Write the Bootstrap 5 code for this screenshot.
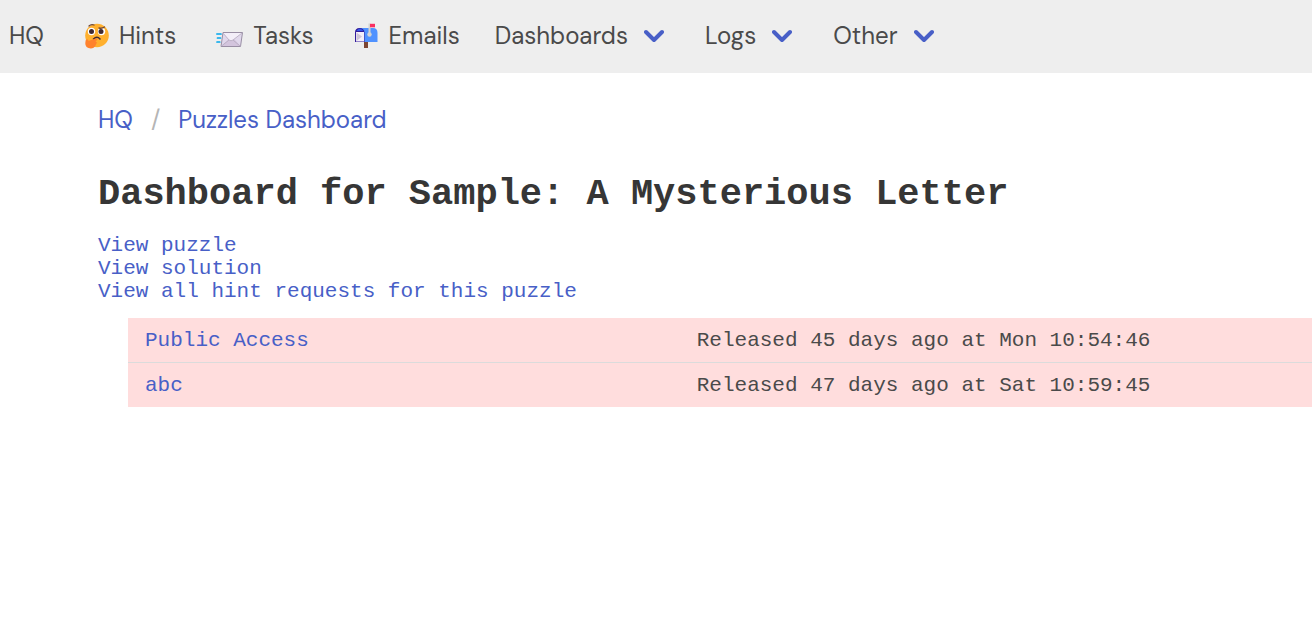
<!DOCTYPE html>
<html lang="en">
<head>
<meta charset="utf-8">
<meta name="viewport" content="width=device-width, initial-scale=1">
<title>Puzzles Dashboard</title>
<link href="https://cdn.jsdelivr.net/npm/bootstrap@5.3.0/dist/css/bootstrap.min.css" rel="stylesheet">
<style>
  body { color: #4a4a4a; font-family: "Courier New", "Liberation Mono", monospace; font-size: 21px; line-height: 23px; }
  a { color: #485fc7; text-decoration: none; }
  .hq-bar, .crumbs { font-family: "DM Sans", Inter, sans-serif; font-size: 24px; line-height: 36px; }
  .hq-bar { background: #eee; padding: 18px 9px 19px; }
  .hq-links { column-gap: 35px; }
  .hq-link { color: #4a4a4a; white-space: nowrap; }
  .hq-link svg { margin: 0 10px 0 5px; }
  .hq-menu { gap: 16px; }
  .hq-menu svg { margin: 0 6px 0 0; }
  .page-body { padding: 29px 0 0 98px; }
  .crumbs { --bs-breadcrumb-divider-color: #b5b5b5; --bs-breadcrumb-item-padding-x: 18px; --bs-breadcrumb-font-size: 24px; margin-bottom: 35px; }
  .page-title { color: #363636; font-size: 37px; line-height: 42px; margin-bottom: 19px; }
  .team-table { margin: 15px 0 0 30px; width: calc(100% - 30px); table-layout: fixed; background: #ffdddd; }
  .team-table td { padding: 11px 17px 10px; }
  .team-table tr + tr td { border-top: 1px solid #dbdbdb; }
  .team-name { width: 46.6%; }
</style>
</head>
<body>
<nav class="hq-bar" aria-label="Main">
  <div class="hq-links d-flex flex-wrap align-items-center">
    <a class="hq-link" href="#">HQ</a>
    <a class="hq-link d-flex align-items-center" href="#">
      <svg width="25" height="26" viewBox="0 0 25 26" aria-hidden="true">
        <circle cx="13" cy="12.500" r="11.800" fill="#ffb02e"/>
        <circle cx="7.500" cy="8.500" r="3.700" fill="#fff"/><circle cx="17.500" cy="8.500" r="3.700" fill="#fff"/>
        <circle cx="7.500" cy="8.500" r="2.500" fill="#402a32"/><circle cx="17" cy="8.500" r="2.500" fill="#402a32"/>
        <path d="M5 3Q7 1 10 2M15 5Q18 5.800 20.500 4" fill="none" stroke="#6d4534" stroke-width="1.300" stroke-linecap="round"/>
        <path d="M9.500 16Q13 12.500 16 16" fill="none" stroke="#402a32" stroke-width="1.600" stroke-linecap="round"/>
        <path d="M1.500 18.500C1.500 16 4 15.500 4.500 18L11.500 15.500C13.500 15 14 16.500 12.500 17.500L11.500 18.500L13 19.500L11.500 22.500C10.500 25 7.500 26 4.500 25C1.500 24 1 21 1.500 18.500Z" fill="#ff822d"/>
      </svg>Hints</a>
    <a class="hq-link d-flex align-items-center" href="#">
      <svg width="27" height="24" viewBox="0 0 27 24" aria-hidden="true">
        <path d="M7 8.500H26.500L24.500 22.500H5Z" fill="#e1d8ec" stroke="#998ea4" stroke-width="1"/>
        <path d="M5.500 22L13 15H18L24.500 22Z" fill="#d3c4dd"/>
        <path d="M7 9H26L17 16Q15 17.500 13 16Z" fill="#f3eef8"/>
        <path d="M7 9L13 16Q15 17.500 17 16L26 9M5.500 22L13 16M24 22L17 16" fill="none" stroke="#b4a8be" stroke-width=".8"/>
        <path d="M.8 10H5M1.500 14H4.500M1 18H3.800" stroke="#00a6ed" stroke-width="1.700" stroke-linecap="round"/>
      </svg>Tasks</a>
    <a class="hq-link d-flex align-items-center" href="#">
      <svg width="25" height="26" viewBox="0 0 25 26" aria-hidden="true">
        <path d="M10 18H14V25H10Z" fill="#7d4533"/>
        <path d="M6 5H19Q23.500 5 23.500 10V19H9Z" fill="#5092ff"/>
        <path d="M1 19V9.500Q1 5 5.500 5T10.500 9.500V19Z" fill="#321b9b"/>
        <path d="M2.500 8Q5.500 3.500 9.500 8Z" fill="#3457e8"/>
        <path d="M2 9H10V18.500H2Z" fill="#f4eef9"/>
        <path d="M2.500 9.500L8 13.500L2.500 18Z" fill="#cdc4d6"/>
        <path d="M15.500 11V.5" stroke="#d3d3d3" stroke-width="2"/>
        <circle cx="15.500" cy="11.500" r="2.200" fill="#d3d3d3"/>
        <path d="M16 .8H21V4.300H16Z" fill="#f92f60"/>
      </svg>Emails</a>
    <a class="hq-link hq-menu d-flex align-items-center" href="#" aria-haspopup="true">Dashboards
      <svg width="20" height="14" viewBox="0 0 20 14" aria-hidden="true"><path d="M2 3L10 11L18 3" fill="none" stroke="#485fc7" stroke-width="4" stroke-linecap="round" stroke-linejoin="round"/></svg></a>
    <a class="hq-link hq-menu d-flex align-items-center" href="#" aria-haspopup="true">Logs
      <svg width="20" height="14" viewBox="0 0 20 14" aria-hidden="true"><path d="M2 3L10 11L18 3" fill="none" stroke="#485fc7" stroke-width="4" stroke-linecap="round" stroke-linejoin="round"/></svg></a>
    <a class="hq-link hq-menu d-flex align-items-center" href="#" aria-haspopup="true">Other
      <svg width="20" height="14" viewBox="0 0 20 14" aria-hidden="true"><path d="M2 3L10 11L18 3" fill="none" stroke="#485fc7" stroke-width="4" stroke-linecap="round" stroke-linejoin="round"/></svg></a>
  </div>
</nav>
<main class="page-body">
  <nav aria-label="Breadcrumb">
    <ol class="breadcrumb crumbs">
      <li class="breadcrumb-item"><a href="#">HQ</a></li>
      <li class="breadcrumb-item"><a href="#">Puzzles Dashboard</a></li>
    </ol>
  </nav>
  <h1 class="page-title fw-bold">Dashboard for Sample: A Mysterious Letter</h1>
  <div class="d-flex flex-column align-items-start">
    <a href="#">View puzzle</a>
    <a href="#">View solution</a>
    <a href="#">View all hint requests for this puzzle</a>
  </div>
  <table class="team-table">
    <tbody>
      <tr><td class="team-name"><a href="#">Public Access</a></td><td>Released 45 days ago at Mon 10:54:46</td></tr>
      <tr><td class="team-name"><a href="#">abc</a></td><td>Released 47 days ago at Sat 10:59:45</td></tr>
    </tbody>
  </table>
</main>
<script src="https://cdn.jsdelivr.net/npm/bootstrap@5.3.0/dist/js/bootstrap.bundle.min.js"></script>
</body>
</html>
